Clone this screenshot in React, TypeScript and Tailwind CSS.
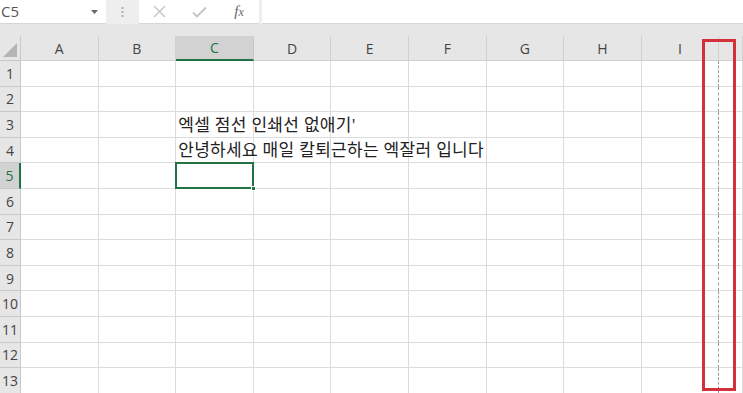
import React from "react";

const cols = ["A", "B", "C", "D", "E", "F", "G", "H", "I", ""];
const rows = Array.from({ length: 13 }, (_, i) => i + 1);

const cellText: Record<string, string> = {
  "3-2": "엑셀 점선 인쇄선 없애기'",
  "4-2": "안녕하세요 매일 칼퇴근하는 엑잘러 입니다",
};

export default function App() {
  return (
    <div
      className="relative w-[743px] h-[393px] overflow-hidden bg-white"
      style={{ fontFamily: '"Open Sans", "Noto Sans CJK KR", sans-serif' }}
    >
      {/* formula bar */}
      <div className="flex h-[24px] bg-[#eeeeee]">
        <div className="w-[106px] bg-white flex items-center justify-between pl-[1px] pr-[8px] border-b border-[#d6d6d6]">
          <span className="text-[15px] text-[#555555] leading-none">C5</span>
          <svg width="7" height="4" viewBox="0 0 7 4">
            <path d="M0 0h7L3.5 4z" fill="#666" />
          </svg>
        </div>
        <div className="w-[33px] flex items-center justify-center">
          <svg width="3" height="10" viewBox="0 0 3 10">
            <rect x="0.5" y="0" width="2" height="2" fill="#b0b0b0" />
            <rect x="0.5" y="4" width="2" height="2" fill="#b0b0b0" />
            <rect x="0.5" y="8" width="2" height="2" fill="#b0b0b0" />
          </svg>
        </div>
        <div className="w-[120px] bg-white flex items-center border-b border-[#d6d6d6]">
          <div className="w-[40px] flex justify-center">
            <svg width="13" height="13" viewBox="0 0 13 13">
              <path d="M1 1L12 12M12 1L1 12" stroke="#c4c4c4" strokeWidth="1.4" />
            </svg>
          </div>
          <div className="w-[40px] flex justify-center">
            <svg width="15" height="12" viewBox="0 0 15 12">
              <path d="M1 6.5L5 10.5L14 1.5" stroke="#c4c4c4" strokeWidth="1.8" fill="none" />
            </svg>
          </div>
          <div className="w-[40px] flex justify-center">
            <span
              className="italic text-[15px] text-[#666666] leading-none"
              style={{ fontFamily: '"Liberation Serif", serif' }}
            >
              f<span className="text-[12px]">x</span>
            </span>
          </div>
        </div>
        <div className="w-[3px]" />
        <div className="flex-1 bg-white border-b border-[#d6d6d6]" />
      </div>
      <div className="h-[12px] bg-[#e6e6e6]" />

      {/* grid */}
      <div className="grid grid-cols-[21px_repeat(9,77.6px)_1fr] grid-rows-[25px_repeat(13,25.6px)] bg-[#e6e6e6]">
        {/* corner */}
        <div className="relative bg-[#e6e6e6] border-r border-b border-[#c8c8c8]">
          <svg className="absolute right-[3px] bottom-[3px]" width="14" height="14" viewBox="0 0 14 14">
            <path d="M14 0V14H0z" fill="#b5b5b5" />
          </svg>
        </div>
        {cols.map((c, i) => (
          <div
            key={c + i}
            className={
              i === 2
                ? "flex items-center justify-center bg-[#d2d2d2] border-r border-[#c8c8c8] border-b-2 border-b-[#217346] text-[14px] text-[#217346]"
                : "flex items-center justify-center border-r border-b border-[#d0d0d0] text-[14px] text-[#444444]"
            }
          >
            {c}
          </div>
        ))}
        {rows.map((r) => (
          <React.Fragment key={r}>
            <div
              className={
                r === 5
                  ? "flex items-center justify-center bg-[#d2d2d2] border-b border-[#c8c8c8] border-r-2 border-r-[#217346] text-[14px] text-[#217346]"
                  : "flex items-center justify-center bg-[#e6e6e6] border-b border-r border-[#c8c8c8] text-[14px] text-[#444444]"
              }
            >
              {r}
            </div>
            {cols.map((_, ci) => {
              const t = cellText[`${r}-${ci}`];
              const selected = r === 5 && ci === 2;
              const dashed = ci === 8;
              return (
                <div
                  key={ci}
                  className={
                    "relative bg-white border-b border-[#dadcdd] " +
                    (dashed
                      ? "border-r border-r-[#9a9a9a] border-dashed"
                      : "border-r border-r-[#dadcdd]")
                  }
                  style={dashed ? { borderBottomStyle: "solid" } : undefined}
                >
                  {t && (
                    <span className="absolute left-[2px] bottom-[4px] whitespace-nowrap text-[17px] tracking-[0.3px] leading-none text-[#222222] z-10">
                      {t}
                    </span>
                  )}
                  {selected && (
                    <div className="absolute -left-[1px] -top-[1px] -right-[1px] -bottom-[1px] border-2 border-[#217346] z-20">
                      <div className="absolute -right-[4px] -bottom-[4px] w-[5px] h-[5px] bg-[#217346] border border-white" />
                    </div>
                  )}
                </div>
              );
            })}
          </React.Fragment>
        ))}
      </div>

      {/* red highlight box */}
      <div className="absolute left-[702px] top-[39px] w-[34px] h-[352px] border-[3px] border-[#d2313c] z-30" />
    </div>
  );
}
